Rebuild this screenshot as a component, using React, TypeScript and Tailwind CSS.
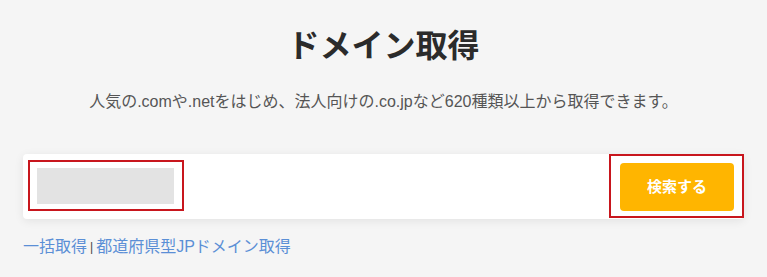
export default function App() {
  return (
    <div
      className="min-h-[277px] bg-[#f5f5f5] px-[23px] pt-[24px]"
      style={{ fontFamily: '"Liberation Sans", "Noto Sans CJK JP", sans-serif' }}
    >
      {/* Title */}
      <h1 className="text-center text-[32px] font-bold leading-[44px] text-[#2b2b2b]">ドメイン取得</h1>
      <p className="mt-[22px] text-center text-[16px] leading-[24px] text-[#555]">
        人気の.comや.netをはじめ、法人向けの.co.jpなど620種類以上から取得できます。
      </p>

      {/* Search box */}
      <div className="mt-[40px] flex h-[65px] items-start justify-between rounded bg-white pl-[5px] shadow-[0_2px_10px_rgba(0,0,0,0.08)]">
        <div className="mt-[6px] border-2 border-[#c8161d] pb-[5px] pl-[7px] pr-[8px] pt-[6px]">
          <div className="h-[36px] w-[137px] bg-[#e3e3e3]" />
        </div>
        <div className="border-2 border-[#c8161d] pb-[5px] pl-[9px] pr-[8px] pt-[7px]">
          <button className="flex h-[48px] w-[114px] items-center justify-center rounded bg-[#ffb500] text-[15px] font-bold text-white">
            検索する
          </button>
        </div>
      </div>

      {/* Links */}
      <div className="mt-[17px] flex items-center text-[16px] leading-[22px]">
        <a className="text-[#5b8fd6]" href="#">一括取得</a>
        <span className="mx-[3px] text-[12px] text-[#444]">|</span>
        <a className="text-[#5b8fd6]" href="#">都道府県型JPドメイン取得</a>
      </div>
    </div>
  )
}
